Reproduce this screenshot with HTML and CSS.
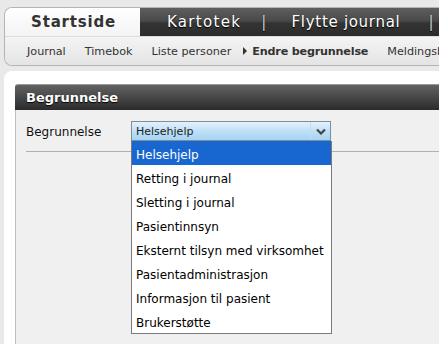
FILE: index.html
```html
<!DOCTYPE html>
<html lang="no">
<head>
    <meta charset="UTF-8">
    <title>Endre begrunnelse</title>
    <link rel="stylesheet" href="styles.css">
</head>
<body>
    <!-- hovedmeny -->
    <div class="topnav">
        <div class="tabs">
            <div class="tab-active">Startside</div>
            <div class="tabs-dark">
                <span class="tab">Kartotek</span>
                <span class="sep">|</span>
                <span class="tab tab-wide">Flytte journal</span>
                <span class="sep sep-last">|</span>
            </div>
        </div>
        <div class="subnav">
            <a href="#">Journal</a>
            <a href="#">Timebok</a>
            <a href="#">Liste personer</a>
            <a href="#" class="current"><span class="arrow"></span>Endre begrunnelse</a>
            <a href="#">Meldingsboks</a>
        </div>
    </div>

    <div class="content">
        <div class="section">
            <div class="section-head">Begrunnelse</div>
            <div class="section-body">
                <div class="row">
                    <label class="row-label">Begrunnelse</label>
                    <div class="select-wrap">
                        <div class="select">
                            <span class="select-value">Helsehjelp</span>
                            <span class="select-btn">
                                <svg width="10" height="7" viewBox="0 0 10 7"><path d="M1 1.5 L5 5.5 L9 1.5" fill="none" stroke="#444" stroke-width="2.2"/></svg>
                            </span>
                        </div>
                        <ul class="dropdown">
                            <li class="selected">Helsehjelp</li>
                            <li>Retting i journal</li>
                            <li>Sletting i journal</li>
                            <li>Pasientinnsyn</li>
                            <li>Eksternt tilsyn med virksomhet</li>
                            <li>Pasientadministrasjon</li>
                            <li>Informasjon til pasient</li>
                            <li>Brukerstøtte</li>
                        </ul>
                    </div>
                </div>
                <div class="rule"></div>
            </div>
        </div>
    </div>
</body>
</html>
```

FILE: styles.css
```css
body {
    margin: 0;
    background: #e9e9e9;
    font-family: "DejaVu Sans", Verdana, sans-serif;
    overflow: hidden;
    height: 344px;
}

/* hovedmeny */
.topnav {
    margin: 7px 0 0 4px;
    width: 700px;
    border: 1px solid #b4b4b4;
    border-right: none;
    border-radius: 8px 0 0 8px;
    overflow: hidden;
    background: #f2f2f2;
}
.tabs {
    display: flex;
    height: 28px;
}
.tab-active {
    width: 133px;
    padding-left: 2px;
    background: linear-gradient(#ffffff, #f3f3f3);
    color: #333;
    font-weight: bold;
    font-size: 15px;
    letter-spacing: 0.8px;
    line-height: 28px;
    text-align: center;
}
.tabs-dark {
    flex: 1;
    display: flex;
    align-items: center;
    background: linear-gradient(#5e5e5e 0%, #4a4a4a 45%, #333333 55%, #2c2c2c 100%);
    color: #ffffff;
    font-size: 15px;
    letter-spacing: 1.3px;
    text-shadow: 0 1px 1px #000;
}
.tab {
    margin-left: 27px;
}
.tab-wide {
    margin-left: 24px;
    letter-spacing: 0.7px;
}
.sep {
    margin-left: 20px;
    color: #d0d0d0;
}
.sep-last {
    margin-left: 28px;
}
.subnav {
    display: flex;
    align-items: center;
    height: 28px;
    padding-left: 22px;
    background: linear-gradient(#f4f4f4, #e4e4e4);
    border-top: 1px solid #dcdcdc;
}
.subnav a {
    color: #333;
    text-decoration: none;
    font-size: 11.2px;
    margin-right: 19px;
}
.subnav a.current {
    font-weight: bold;
    letter-spacing: -0.2px;
    display: flex;
    align-items: center;
    margin-left: -7px;
}
.arrow {
    display: inline-block;
    width: 0;
    height: 0;
    border-left: 4px solid #333;
    border-top: 4px solid transparent;
    border-bottom: 4px solid transparent;
    margin-right: 5px;
}

/* innhold */
.content {
    margin: 5px 0 0 4px;
    background: #ffffff;
    border-radius: 8px 0 0 0;
    padding: 13px 0 0 11px;
    height: 300px;
}
.section {
    height: 100%;
}
.section-head {
    height: 25px;
    border-top: 1px solid #9a9a9a;
    background: linear-gradient(#626262, #2b2b2b);
    color: #ffffff;
    font-weight: bold;
    font-size: 13px;
    line-height: 26px;
    padding-left: 11px;
    text-shadow: 0 1px 1px #000;
    border-radius: 3px 0 0 0;
}
.section-body {
    background: #f0f0f0;
    border-left: 1px solid #bdbdbd;
    height: 100%;
    padding: 11px 0 0 10px;
}
.row {
    display: flex;
    align-items: center;
    height: 20px;
}
.row-label {
    width: 105px;
    font-size: 12px;
    color: #111;
    padding-top: 1px;
}
.select-wrap {
    position: relative;
}
.select {
    width: 198px;
    height: 18px;
    border: 1px solid #7e8c9c;
    background: linear-gradient(#e4f1fc, #bfe0f7 50%, #a6d4f1);
    display: flex;
    align-items: center;
}
.select-value {
    flex: 1;
    font-size: 11px;
    color: #222;
    padding-left: 4px;
    padding-top: 1px;
}
.select-btn {
    width: 18px;
    height: 18px;
    border-left: 1px solid #c6dcee;
    display: flex;
    align-items: center;
    justify-content: center;
    padding-left: 1px;
}
.dropdown {
    position: absolute;
    left: 0;
    top: 20px;
    width: 199px;
    margin: 0;
    padding: 0;
    list-style: none;
    background: #ffffff;
    border: 1px solid #7a7a7a;
    border-top: none;
    z-index: 5;
}
.dropdown li {
    height: 22px;
    padding-top: 2px;
    line-height: 24px;
    padding-left: 4px;
    font-size: 12px;
    color: #000;
}
.dropdown li.selected {
    background: #1866d0;
    color: #ffffff;
}
.rule {
    margin-top: 10px;
    height: 1px;
    background: #b0b0b0;
}
```
